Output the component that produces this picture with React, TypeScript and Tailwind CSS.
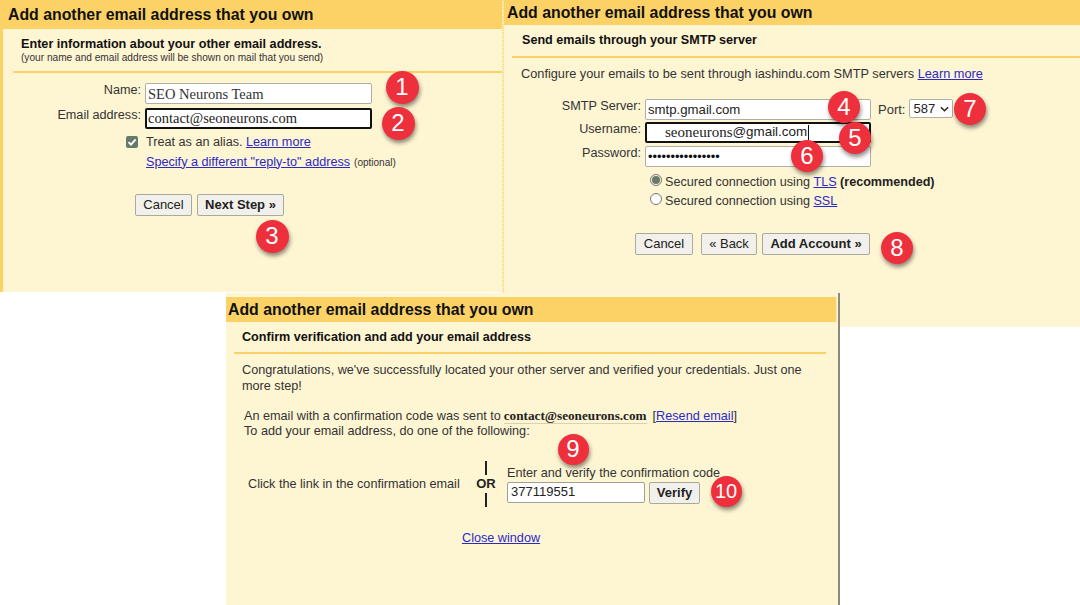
import React from "react";

const sans = "font-['Liberation_Sans',Arial,sans-serif]";
const serif = "font-['Liberation_Serif','Times_New_Roman',serif]";
const link = "text-[#2a2ac8] underline";
const btn =
  "h-[22px] rounded-[2px] border border-[#a9a9a0] bg-[#f1f0ea] text-[13px] leading-[20px] text-[#222] flex items-center justify-center";

function Badge({ n, x, y, d = 33, size = 24 }: { n: string; x: number; y: number; d?: number; size?: number }) {
  return (
    <div
      className="absolute flex items-center justify-center rounded-full bg-[#ee2f3c] text-white shadow-[1px_3px_4px_rgba(0,0,0,0.45)]"
      style={{ left: x - d / 2, top: y - d / 2, width: d, height: d, fontSize: size }}
    >
      {n}
    </div>
  );
}

function Header({ className = "" }: { className?: string }) {
  return (
    <div className={`flex h-[25px] items-center bg-[#fcd266] text-[15.85px] font-bold text-[#111] ${className}`}>
      Add another email address that you own
    </div>
  );
}

function Field({
  label,
  value,
  labelW,
  inputW,
  focused,
  font,
  className = "",
  inputClass = "",
}: {
  label: string;
  value: React.ReactNode;
  labelW: string;
  inputW: string;
  focused?: boolean;
  font?: string;
  className?: string;
  inputClass?: string;
}) {
  return (
    <div className={`flex ${className}`}>
      <div className={`${labelW} pr-[4px] text-right text-[12.65px] leading-[14px] text-[#333]`}>{label}</div>
      <div
        className={`${inputW} flex h-[21px] items-center rounded-[2px] bg-white ${font ?? ""} ${inputClass} ${
          focused ? "border-2 border-[#111]" : "border border-[#aeb0a6]"
        }`}
      >
        {value}
      </div>
    </div>
  );
}

function Win1() {
  return (
    <div className="absolute left-0 top-0 flex h-[292px] w-[503px] flex-col border-l-[3px] border-t border-r border-[#fcd266] border-r-[#fdeaa8] bg-[#fef5d3]">
      <Header className="h-[28px] pl-[5px]" />
      <div className="ml-[10px] h-[44px] border-b-2 border-[#fcd266] pl-[8px] pt-[8px]">
        <div className="text-[12.65px] font-bold leading-[14px] text-[#111]">
          Enter information about your other email address.
        </div>
        <div className="text-[10.15px] leading-[13px] text-[#333]">
          (your name and email address will be shown on mail that you send)
        </div>
      </div>
      <div className="mt-[10px] flex flex-col gap-[4px]">
        <Field label="Name:" value="SEO Neurons Team" labelW="w-[142px]" inputW="w-[227px]" font={`${serif} text-[14.5px] text-[#333] pt-[2px]`} inputClass="pl-[2px]" />
        <Field label="Email address:" value="contact@seoneurons.com" labelW="w-[142px]" inputW="w-[227px]" focused font={`${serif} text-[14.5px] text-[#222]`} inputClass="pl-[1px]" />
      </div>
      <div className="ml-[123px] mt-[6px] flex h-[14px] items-center text-[12.65px] text-[#333]">
        <span className="mr-[8px] flex h-[12px] w-[12px] items-center justify-center rounded-[2px] bg-[#667a6c]">
          <svg viewBox="0 0 12 12" className="h-[12px] w-[12px]">
            <path d="M2.5 6.2 5 8.7 9.6 3.3" fill="none" stroke="#fff" strokeWidth="1.8" />
          </svg>
        </span>
        Treat as an alias.&nbsp;<span className={link}>Learn more</span>
      </div>
      <div className="ml-[143px] mt-[6px] flex h-[14px] items-center text-[12.65px]">
        <span className={link}>Specify a different "reply-to" address</span>
        <span className="ml-[4px] text-[10px] text-[#333]">(optional)</span>
      </div>
      <div className="ml-[132px] mt-[25px] flex gap-[5px]">
        <div className={`${btn} w-[57px]`}>Cancel</div>
        <div className={`${btn} w-[87px] font-bold`}>Next Step »</div>
      </div>
    </div>
  );
}

function Win2() {
  return (
    <div className="absolute left-[503px] top-0 flex h-[327px] w-[577px] flex-col border-l border-dotted border-[#fcd266] bg-[#fef5d3]">
      <Header className="pl-[3px]" />
      <div className="ml-[8px] h-[33px] border-b-2 border-[#fcd266] pl-[10px] pt-[8px] text-[12.6px] font-bold leading-[14px] text-[#111]">
        Send emails through your SMTP server
      </div>
      <div className="ml-[17px] mt-[9px] text-[12.75px] leading-[14px] text-[#333]">
        Configure your emails to be sent through iashindu.com SMTP servers <span className={link}>Learn more</span>
      </div>
      <div className="mt-[18px] flex flex-col gap-[2px]">
        <div className="flex">
          <Field label="SMTP Server:" value="smtp.gmail.com" labelW="w-[141px]" inputW="w-[226px]" font="text-[13.2px] text-[#222]" inputClass="pl-[2px]" />
          <span className="ml-[7px] flex h-[21px] items-center text-[13px] text-[#333]">Port:</span>
          <div className="ml-[4px] flex h-[19px] w-[44px] items-center justify-between rounded-[2px] border border-[#aeb0a6] bg-white px-[3px] text-[13px] text-[#222]">
            587
            <svg viewBox="0 0 10 6" className="h-[6px] w-[9px]">
              <path d="M1 1l4 4 4-4" fill="none" stroke="#222" strokeWidth="1.6" />
            </svg>
          </div>
        </div>
        <Field
          label="Username:"
          value={
            <>
              <span className={`${serif} text-[15px]`}>seoneurons</span>@gmail.com
              <span className="ml-[1px] h-[15px] w-px bg-[#111]" />
            </>
          }
          labelW="w-[141px]"
          inputW="w-[226px]"
          focused
          font="text-[13.4px] text-[#222]"
          inputClass="pl-[18px]"
        />
        <div className="mt-[1px]">
          <Field label="Password:" value="••••••••••••••••" labelW="w-[141px]" inputW="w-[226px]" font="text-[12.8px] text-[#111]" inputClass="pl-[2px]" />
        </div>
      </div>
      <div className="ml-[146px] mt-[5px] flex h-[19px] items-center pt-[1px] text-[12.6px] text-[#333]">
        <span className="mb-[4px] mr-[3px] flex h-[12px] w-[12px] items-center justify-center rounded-full border border-[#777]">
          <span className="h-[8px] w-[8px] rounded-full bg-[#667a6c]" />
        </span>
        Secured connection using&nbsp;<span className={link}>TLS</span>&nbsp;<b className="text-[#222]">(recommended)</b>
      </div>
      <div className="ml-[146px] flex h-[19px] items-center pt-[1px] text-[12.6px] text-[#333]">
        <span className="mb-[4px] mr-[3px] h-[12px] w-[12px] rounded-full border border-[#777] bg-white" />
        Secured connection using&nbsp;<span className={link}>SSL</span>
      </div>
      <div className="ml-[131px] mt-[23px] flex">
        <div className={`${btn} w-[58px]`}>Cancel</div>
        <div className={`${btn} ml-[8px] w-[56px]`}>« Back</div>
        <div className={`${btn} ml-[5px] w-[108px] font-bold`}>Add Account »</div>
      </div>
    </div>
  );
}

function Win3() {
  return (
    <div className="absolute left-[226px] top-[293px] flex h-[312px] w-[614px] flex-col border-r-2 border-[#8a8a80] bg-[#fef5d3]">
      <div className="mr-[1px] mt-[4px] border-r border-[#fdeaa8]">
        <Header className="pl-[2px]" />
      </div>
      <div className="ml-[8px] mr-[12px] h-[32px] border-b-2 border-[#fcd266] pl-[8px] pt-[8px] text-[12.6px] font-bold leading-[14px] text-[#111]">
        Confirm verification and add your email address
      </div>
      <div className="ml-[16px] mt-[8px] w-[570px] text-[12.66px] leading-[16px] text-[#333]">
        Congratulations, we've successfully located your other server and verified your credentials. Just one more step!
      </div>
      <div className="ml-[18px] mt-[14px] text-[12.66px] leading-[15px] text-[#333]">
        <div className="flex items-center">
          An email with a confirmation code was sent to
          <b className={`${serif} ml-[3px] border-b border-[#d8d2b4] text-[13.2px] text-[#222]`}>contact@seoneurons.com</b>
          <span className="ml-[6px]">
            [<span className={link}>Resend email</span>]
          </span>
        </div>
        <div>To add your email address, do one of the following:</div>
      </div>
      <div className="mt-[22px] flex items-center text-[12.66px] text-[#333]">
        <div className="ml-[22px] w-[225px]">Click the link in the confirmation email</div>
        <div className="flex w-[26px] flex-col items-center text-[13px] font-bold text-[#222]">
          <span className="h-[14px] w-[1.5px] bg-[#222]" />
          <span className="my-[2px] leading-[14px]">OR</span>
          <span className="h-[14px] w-[1.5px] bg-[#222]" />
        </div>
        <div className="ml-[8px] flex flex-col pt-[1px]">
          <div className="leading-[14px]">Enter and verify the confirmation code</div>
          <div className="mt-[2px] flex">
            <div className="flex h-[21px] w-[138px] items-center rounded-[2px] border border-[#a0a09a] bg-white px-[3px] text-[13px] text-[#222]">
              377119551
            </div>
            <div className={`${btn} ml-[4px] h-[21px] w-[51px] font-bold`}>Verify</div>
          </div>
        </div>
      </div>
      <div className={`ml-[236px] mt-[23px] text-[12.66px] leading-[16px] ${link}`}>Close window</div>
    </div>
  );
}

export default function App() {
  return (
    <div className={`relative h-[605px] w-[1080px] overflow-hidden bg-white ${sans}`}>
      <Win1 />
      <Win2 />
      <Win3 />
      <Badge n="1" x={402} y={87} />
      <Badge n="2" x={398} y={123} />
      <Badge n="3" x={272} y={236} />
      <Badge n="4" x={844} y={107} d={32} />
      <Badge n="5" x={855} y={138} d={32} />
      <Badge n="6" x={807} y={156} d={32} />
      <Badge n="7" x={970} y={109} d={32} />
      <Badge n="8" x={897} y={248} d={32} />
      <Badge n="9" x={573} y={449} d={31} />
      <Badge n="10" x={726} y={491} d={31} size={20} />
    </div>
  );
}
